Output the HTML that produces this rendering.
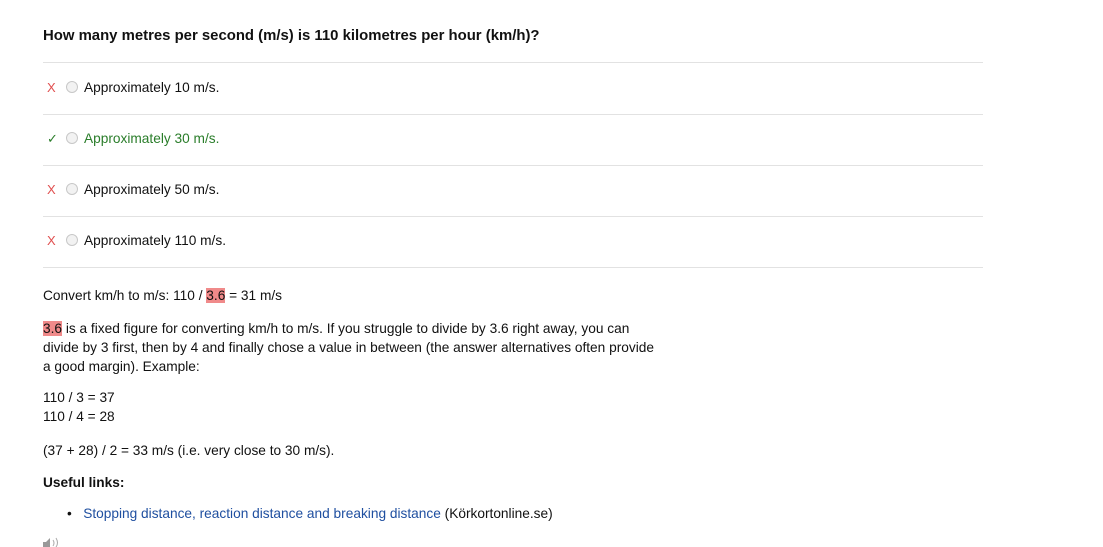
<!DOCTYPE html>
<html><head><meta charset="utf-8"><style>
body{margin:0;width:1103px;height:547px;background:#fff;font-family:"Liberation Sans",Arial,sans-serif;font-size:13.7px;color:#111;position:relative;overflow:hidden}
.a{position:absolute;white-space:nowrap;line-height:19px}
.hr{position:absolute;left:43px;width:940px;height:1px;background:#e2e2e2}
.m{display:inline-block;width:19px;font-size:13px}
.x{color:#e05050}
.ok{color:#2a7d2a}
.r{display:inline-block;width:12px;height:12px;border:1px solid #c8c8c8;border-radius:50%;background:#f2f2f2;box-sizing:border-box;vertical-align:-1px;margin:0 6px 0 0}
.hl{background:#f08a8a}
a{color:#1f4fa0;text-decoration:none}
</style></head><body>
<div class="a" style="left:43px;top:27px;font-weight:bold;font-size:14.9px">How many metres per second (m/s) is 110 kilometres per hour (km/h)?</div>
<div class="hr" style="top:62px"></div>
<div class="a" style="left:47px;top:78px"><span class="m x">X</span><span class="r"></span>Approximately 10 m/s.</div>
<div class="hr" style="top:114px"></div>
<div class="a ok" style="left:47px;top:129px"><span class="m">✓</span><span class="r"></span>Approximately 30 m/s.</div>
<div class="hr" style="top:165px"></div>
<div class="a" style="left:47px;top:180px"><span class="m x">X</span><span class="r"></span>Approximately 50 m/s.</div>
<div class="hr" style="top:216px"></div>
<div class="a" style="left:47px;top:231px"><span class="m x">X</span><span class="r"></span>Approximately 110 m/s.</div>
<div class="hr" style="top:267px"></div>
<div class="a" style="left:43px;top:286px">Convert km/h to m/s: 110 / <span class="hl">3.6</span> = 31 m/s</div>
<div class="a" style="left:43px;top:319px"><span class="hl">3.6</span> is a fixed figure for converting km/h to m/s. If you struggle to divide by 3.6 right away, you can</div>
<div class="a" style="left:43px;top:338px">divide by 3 first, then by 4 and finally chose a value in between (the answer alternatives often provide</div>
<div class="a" style="left:43px;top:357px">a good margin). Example:</div>
<div class="a" style="left:43px;top:388px">110 / 3 = 37</div>
<div class="a" style="left:43px;top:407px">110 / 4 = 28</div>
<div class="a" style="left:43px;top:441px">(37 + 28) / 2 = 33 m/s (i.e. very close to 30 m/s).</div>
<div class="a" style="left:43px;top:473px;font-weight:bold">Useful links:</div>
<div class="a" style="left:67px;top:504px">•&nbsp;&nbsp;&nbsp;<a>Stopping distance, reaction distance and breaking distance</a> (Körkortonline.se)</div>
<svg style="position:absolute;left:43px;top:537px" width="18" height="10"><path d="M0 5h3l4-4v9H0z" fill="#999"/><path d="M10 3q2 3 0 6M13 1q3 5 0 9" stroke="#aaa" fill="none"/></svg>
</body></html>
